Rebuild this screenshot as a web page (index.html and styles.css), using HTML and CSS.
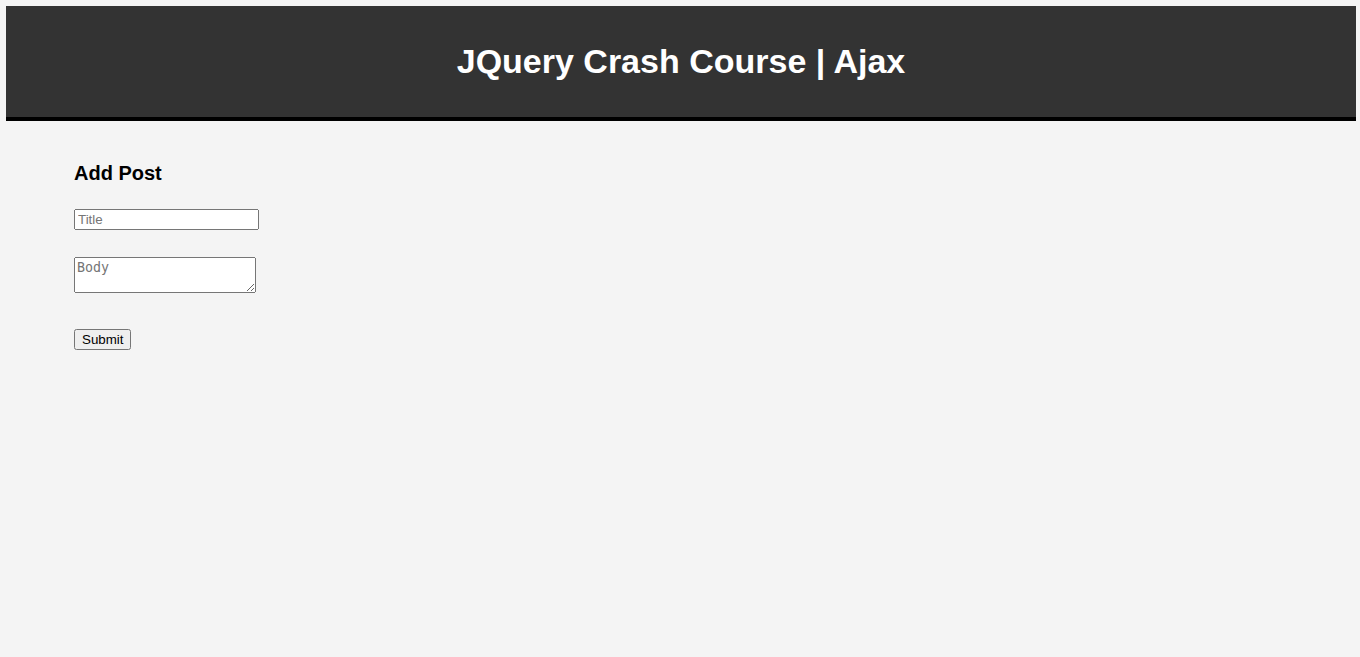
FILE: index.html
```html
<!DOCTYPE html>
<html lang="en">
<head>
<meta charset="utf-8">
<title>JQuery Crash Course | Ajax</title>
<link rel="stylesheet" href="styles.css">
</head>
<body>
  <header class="site-header">
    <h1 class="site-title">JQuery Crash Course | Ajax</h1>
  </header>
  <main class="container">
    <h3 class="section-title">Add Post</h3>
    <form class="post-form">
      <input class="field-title" type="text" placeholder="Title">
      <textarea class="field-body" placeholder="Body"></textarea>
      <input class="submit-btn" type="submit" value="Submit">
    </form>
  </main>
</body>
</html>
```
FILE: styles.css
```css
html {
  background: #f4f4f4;
}
body {
  margin: 6px 4px 0 6px;
  background: #f4f4f4;
  font-family: "Liberation Sans", Arial, sans-serif;
}
.site-header {
  background: #333333;
  color: #ffffff;
  border-bottom: 4px solid #000000;
  padding: 16px 0 12px;
  text-align: center;
}
.site-title {
  margin: 20px 0 24px;
  font-size: 34px;
  line-height: 39px;
  font-weight: bold;
}
.container {
  padding: 41px 0 0 68px;
}
.section-title {
  margin: 0;
  font-size: 20px;
  line-height: 23px;
  font-weight: bold;
  color: #000;
}
.post-form {
  display: flex;
  flex-direction: column;
  align-items: flex-start;
}
.field-title {
  margin: 24px 0 0;
  box-sizing: border-box;
  width: 185px;
  height: 21px;
  font-family: "Liberation Sans", Arial, sans-serif;
  font-size: 13.333px;
}
.field-body {
  margin: 27px 0 0;
  box-sizing: border-box;
  width: 182px;
  height: 36px;
  font-family: "DejaVu Sans Mono", monospace;
  font-size: 13.333px;
}
.submit-btn {
  margin: 36px 0 0;
  box-sizing: border-box;
  width: 57px;
  height: 21px;
  font-family: "Liberation Sans", Arial, sans-serif;
  font-size: 13.333px;
}
```
